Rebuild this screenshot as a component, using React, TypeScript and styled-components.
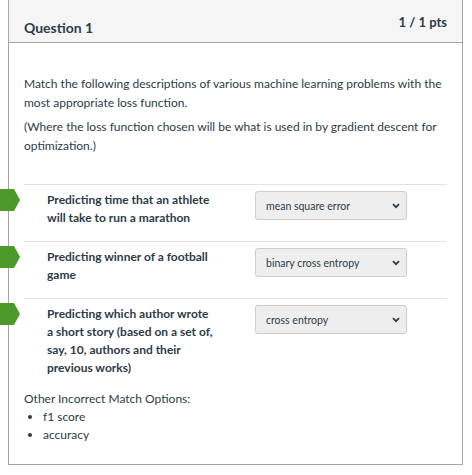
import React from "react";
import styled, { createGlobalStyle } from "styled-components";

const Global = createGlobalStyle`
  html, body { margin: 0; padding: 0; background: #ffffff; }
  body { font-family: Lato, "Open Sans", sans-serif; color: #2d3b45; }
`;

const Card = styled.div`
  position: relative;
  margin-left: 8px;
  width: 453px;
  border: 1px solid #a0a6aa;
  border-top: none;
  background: #fff;
`;

const Header = styled.div`
  display: flex;
  justify-content: space-between;
  align-items: flex-start;
  background: #f5f5f5;
  border-bottom: 1px solid #a0a6aa;
  height: 42px;
  padding: 0 15px 0 15px;
`;

const Title = styled.h2`
  margin: 0;
  padding-top: 19px;
  font-size: 14px;
  font-weight: 700;
  line-height: 18px;
`;

const Points = styled.div`
  padding-top: 14px;
  font-size: 13px;
  font-weight: 700;
  line-height: 16px;
`;

const Body = styled.div`
  padding: 32px 15px 20px 15px;
`;

const Para = styled.p`
  margin: 0 0 6px 0;
  font-size: 12px;
  line-height: 18.5px;
`;

const Matches = styled.div`
  margin-top: 29px;
`;

const Row = styled.div`
  position: relative;
  display: flex;
  align-items: flex-start;
  border-top: 1px solid #dfe2e4;
  padding: 6px 0 14px 0;
  &:last-child { padding-bottom: 13px; }
`;

const Label = styled.div`
  width: 170px;
  margin-left: 23px;
  margin-right: 38px;
  font-size: 12px;
  font-weight: 700;
  line-height: 18px;
`;

const Select = styled.div`
  display: flex;
  align-items: center;
  justify-content: space-between;
  box-sizing: border-box;
  width: 152px;
  height: 29px;
  padding: 0 6px 0 10px;
  background: #eeeeee;
  border: 1px solid #c7cdd1;
  border-radius: 3px;
  font-size: 10.5px;
  color: #2d3b45;
`;

const Arrow = styled.svg`
  position: absolute;
  left: -24px;
  top: 4px;
`;

const Others = styled.div`
  font-size: 12px;
  line-height: 18px;
`;

const List = styled.ul`
  margin: 0;
  padding-left: 19px;
  li { line-height: 18px; }
`;

const Chevron = () => (
  <svg width="8" height="6" viewBox="0 0 8 6">
    <path d="M1 1.2 L4 4.2 L7 1.2" fill="none" stroke="#2d3b45" strokeWidth="1.8" />
  </svg>
);

const GreenArrow = () => (
  <Arrow width="20" height="22" viewBox="0 0 20 22">
    <path d="M0 0 H14 L20 11 L14 22 H0 Z" fill="#4c9a2a" />
  </Arrow>
);

const rows = [
  { label: "Predicting time that an athlete will take to run a marathon", value: "mean square error" },
  { label: "Predicting winner of a football game", value: "binary cross entropy" },
  {
    label: "Predicting which author wrote a short story (based on a set of, say, 10, authors and their previous works)",
    value: "cross entropy",
  },
];

export default function App() {
  return (
    <>
      <Global />
      <Card>
        <Header>
          <Title>Question 1</Title>
          <Points>1 / 1 pts</Points>
        </Header>
        <Body>
          <Para>
            Match the following descriptions of various machine learning problems with the most appropriate loss function.
          </Para>
          <Para>
            (Where the loss function chosen will be what is used in by gradient descent for optimization.)
          </Para>
          <Matches>
            {rows.map((r) => (
              <Row key={r.value}>
                <GreenArrow />
                <Label>{r.label}</Label>
                <Select>
                  <span>{r.value}</span>
                  <Chevron />
                </Select>
              </Row>
            ))}
          </Matches>
          <Others>
            Other Incorrect Match Options:
            <List>
              <li>f1 score</li>
              <li>accuracy</li>
            </List>
          </Others>
        </Body>
      </Card>
    </>
  );
}
